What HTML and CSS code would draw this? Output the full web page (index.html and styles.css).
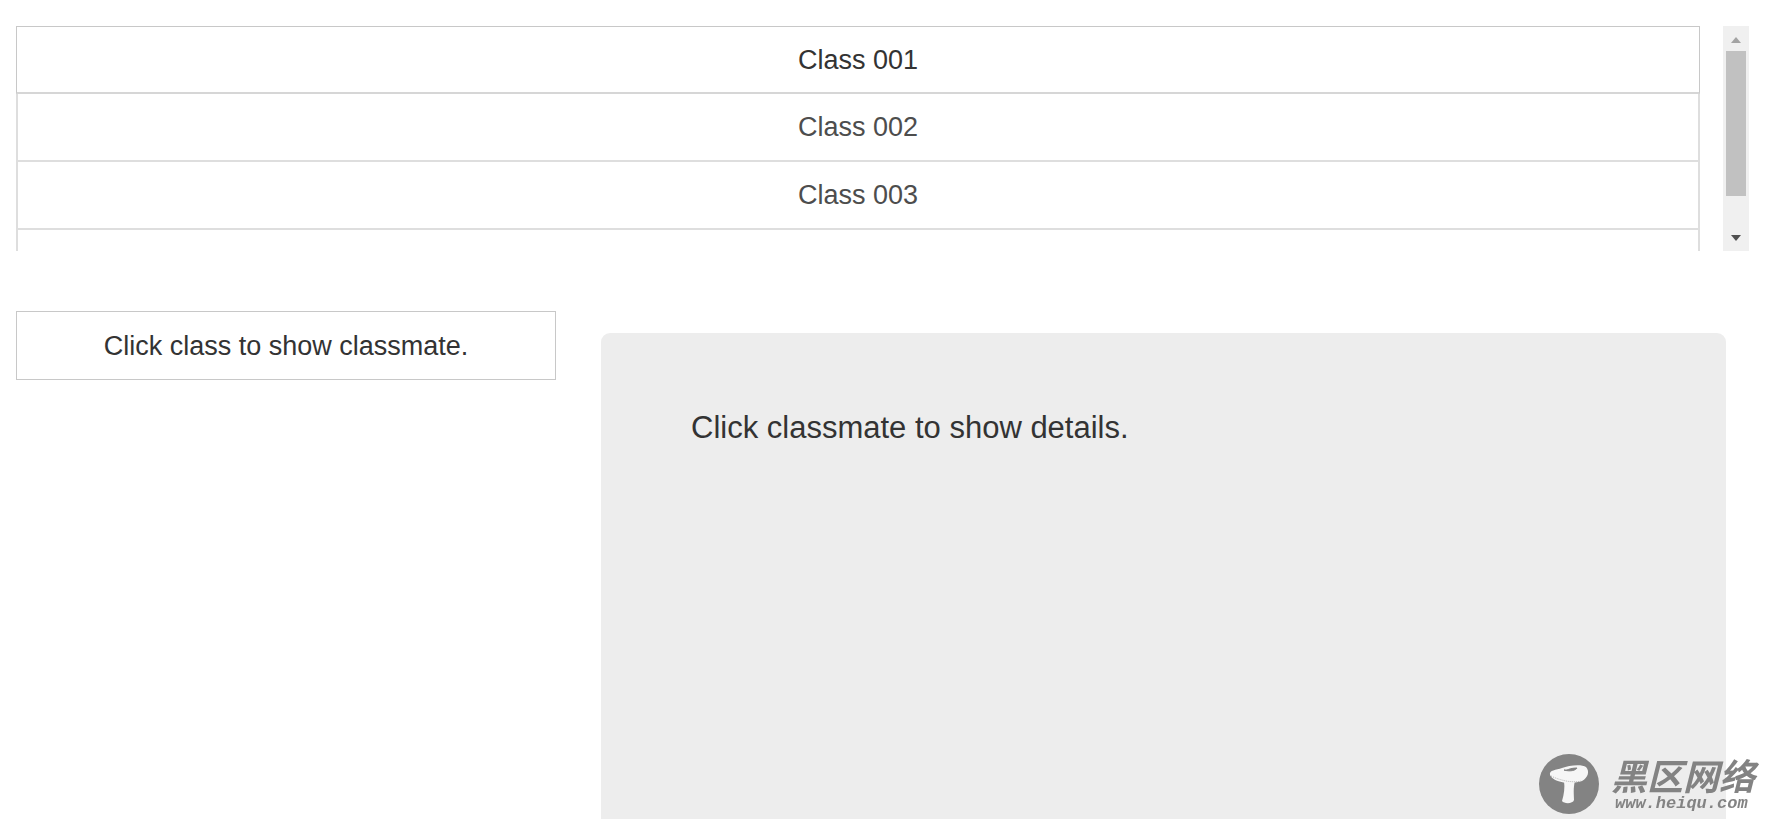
FILE: index.html
```html
<!DOCTYPE html>
<html lang="en">
<head>
    <meta charset="UTF-8">
    <meta name="viewport" content="width=device-width, initial-scale=1.0">
    <title>Class list</title>
    <link rel="stylesheet" href="styles.css">
</head>
<body>

    <div class="class-area">
        <ul class="class-list">
            <li><button type="button" class="active">Class 001</button></li>
            <li><button type="button">Class 002</button></li>
            <li><button type="button">Class 003</button></li>
            <li class="empty"></li>
        </ul>
        <div class="scrollbar">
            <svg class="arrow" viewBox="0 0 26 25"><path d="M8 17h10l-5-6z" fill="#a3a3a3"/></svg>
            <div class="track">
                <div class="thumb"></div>
            </div>
            <svg class="arrow" viewBox="0 0 26 25"><path d="M8 9h10l-5 6z" fill="#505050"/></svg>
        </div>
    </div>

    <div class="content">
        <div class="classmates">Click class to show classmate.</div>
        <div class="details">
            <p>Click classmate to show details.</p>
        </div>
    </div>

    <div class="site-mark">
        <svg class="mark-logo" viewBox="0 0 60 60">
            <circle cx="30" cy="30" r="30" fill="#838383"/>
            <path d="M25 27L36 27C34 34 35 41 35 46C34 50 25 50 23 47C25 40 26 34 25 27Z" fill="#f6f6f6"/>
            <path d="M11 21C10 16 17 16 23 14C30 11 43 10 47 13C51 17 49 24 43 27C35 30 15 30 11 21Z" fill="#f6f6f6"/>
            <path d="M12 22C18 25 23 26 27 27C33 28 38 28 43 27" fill="none" stroke="#b5b5b5" stroke-dasharray="1 1"/>
            <path d="M25 16C28 17 30 14 38 14C37 16 32 18 25 16Z" fill="#838383" stroke="#838383"/>
        </svg>
        <div class="mark-text">
            <span class="mark-name" lang="zh-CN">黑区网络</span>
            <span class="mark-url">www.heiqu.com</span>
        </div>
    </div>

</body>
</html>
```
FILE: styles.css
```css
* {
    box-sizing: border-box;
}

body {
    margin: 0;
    padding: 26px 22px 0 16px;
    height: 100vh;
    overflow: hidden;
    display: flex;
    flex-direction: column;
    font-family: Arial, "Liberation Sans", sans-serif;
    font-size: 27px;
    color: #333;
    background: #fff;
}

.class-area {
    display: flex;
    gap: 23px;
    height: 225px;
    flex-shrink: 0;
    overflow: hidden;
}

.class-list {
    flex: 1;
    margin: 0;
    padding: 0;
    list-style: none;
}

.class-list button,
.class-list .empty {
    display: block;
    width: 100%;
    height: 68px;
    padding: 0;
    border: 2px solid #dedede;
    border-top: none;
    background: #fff;
    color: #4d4d4d;
    font: inherit;
    cursor: pointer;
}

.class-list button.active {
    padding-top: 2px;
    border: 1px solid #c8c8c8;
    border-bottom: 2px solid #d6d6d6;
    color: #333;
}

.scrollbar {
    width: 26px;
    display: flex;
    flex-direction: column;
    background: #f0f0f0;
}

.arrow {
    display: block;
    width: 26px;
    height: 25px;
}

.track {
    flex: 1;
    padding: 0 3px;
}

.thumb {
    height: 145px;
    background: #c1c1c1;
}

.content {
    flex: 1;
    display: flex;
    align-items: flex-start;
    gap: 45px;
    padding: 60px 23px 0 0;
}

.classmates {
    width: 540px;
    height: 69px;
    line-height: 69px;
    border: 1px solid #c8c8c8;
    text-align: center;
}

.details {
    flex: 1;
    align-self: stretch;
    margin-top: 22px;
    padding: 72px 90px 0;
    border-radius: 9px 9px 0 0;
    background: #ededed;
}

.details p {
    margin: 0;
    font-size: 31px;
    line-height: 46px;
}

/* site mark, bottom right */
.site-mark {
    position: fixed;
    right: 16px;
    bottom: 5px;
    display: flex;
    align-items: center;
    gap: 12px;
    color: #838383;
}

.mark-logo {
    width: 60px;
    height: 60px;
}

.mark-text {
    display: flex;
    flex-direction: column;
}

.mark-name {
    font-family: "Noto Sans CJK SC", sans-serif;
    font-size: 36px;
    line-height: 40px;
    font-weight: bold;
    font-style: italic;
}

.mark-url {
    padding-left: 4px;
    font-family: "Liberation Mono", monospace;
    font-size: 17px;
    line-height: 20px;
    font-weight: bold;
    font-style: italic;
}
```
